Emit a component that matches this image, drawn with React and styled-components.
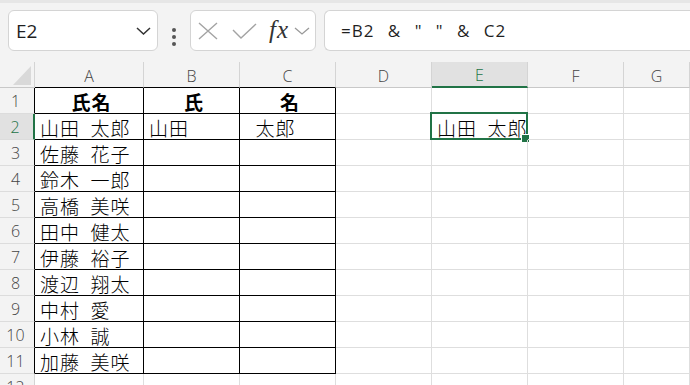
import styled, { createGlobalStyle } from "styled-components";

const GREEN = "#217346";
const GRID = "#dedede";
const HEAD_BG = "#f3f3f3";

const GlobalStyle = createGlobalStyle`
  html, body {
    margin: 0;
    padding: 0;
    background: #fff;
  }
  body {
    font-family: "Open Sans", "Noto Sans CJK JP", sans-serif;
    color: #1f1f1f;
  }
`;

const Page = styled.div`
  width: 690px;
  height: 385px;
  overflow: hidden;
  display: flex;
  flex-direction: column;
  background: #fff;
`;

// barra superior: cuadro de nombre, botones y barra de fórmulas
const Toolbar = styled.div`
  height: 62px;
  flex: none;
  box-sizing: border-box;
  border-top: 3px solid #e6e6e6;
  background: ${HEAD_BG};
  display: flex;
  align-items: flex-start;
  padding: 7px 0 0 8px;
`;

const Box = styled.div`
  height: 41px;
  box-sizing: border-box;
  background: #fff;
  border: 1px solid #d4d4d4;
  display: flex;
  align-items: center;
`;

const NameBox = styled(Box)`
  width: 150px;
  border-radius: 6px;
  justify-content: space-between;
  padding: 0 6px 0 7px;
  font-size: 19px;
  color: #1f1f1f;
`;

const Dots = styled.div`
  align-self: center;
  margin: 1px 0 0 14px;
  display: flex;
  flex-direction: column;
  gap: 3px;
  & > span {
    width: 4px;
    height: 4px;
    border-radius: 50%;
    background: #555;
  }
`;

const FxBox = styled(Box)`
  width: 126px;
  margin-left: 14px;
  border-radius: 6px;
  padding-left: 7px;
`;

const Slot = styled.span`
  display: flex;
  align-items: center;
  margin-left: ${(p) => p.$ml || 0}px;
`;

const FxLabel = styled.span`
  font-family: "Liberation Serif", serif;
  font-style: italic;
  font-size: 25px;
  letter-spacing: 1px;
  color: #333;
  line-height: 1;
  margin-top: -2px;
`;

const FormulaBar = styled(Box)`
  flex: 1;
  margin-left: 8px;
  border-right: none;
  border-radius: 6px 0 0 6px;
  padding-left: 16px;
  font-size: 17px;
  letter-spacing: 1px;
  word-spacing: 8px;
  white-space: pre;
  color: #1f1f1f;
`;

// hoja
const Sheet = styled.div`
  display: grid;
  grid-template-columns: 35px 109px repeat(5, 96px) 1fr;
  grid-auto-rows: 26px;
`;

const Corner = styled.div`
  background: ${HEAD_BG};
  border-right: 1px solid #d4d4d4;
  border-bottom: 1px solid #c8c8c8;
  display: flex;
  align-items: flex-end;
  justify-content: flex-end;
  padding: 0 3px 2px 0;
`;

const ColHead = styled.div`
  background: ${(p) => (p.$active ? "#e1e1e1" : HEAD_BG)};
  color: ${(p) => (p.$active ? GREEN : "#444")};
  border-right: 1px solid #d4d4d4;
  border-bottom: ${(p) =>
    p.$active
      ? `2px solid ${GREEN}`
      : p.$table
      ? "1px solid #000"
      : "1px solid #c8c8c8"};
  display: flex;
  align-items: center;
  justify-content: center;
  font-size: 16px;
  font-weight: 300;
  padding-top: 2px;
`;

const RowHead = styled.div`
  background: ${(p) => (p.$active ? "#e1e1e1" : HEAD_BG)};
  color: ${(p) => (p.$active ? GREEN : "#444")};
  border-right: ${(p) =>
    p.$active
      ? `2px solid ${GREEN}`
      : p.$table
      ? "1px solid #000"
      : "1px solid #d4d4d4"};
  border-bottom: 1px solid #dcdcdc;
  display: flex;
  align-items: center;
  justify-content: center;
  padding-right: 3px;
  font-size: 16px;
  font-weight: 300;
`;

const Cell = styled.div`
  position: relative;
  border-right: 1px solid ${(p) => (p.$table ? "#000" : GRID)};
  border-bottom: 1px solid ${(p) => (p.$table ? "#000" : GRID)};
  display: flex;
  align-items: center;
  justify-content: ${(p) => (p.$head ? "center" : "flex-start")};
  padding: 2px 0 0 5px;
  font-family: "Liberation Mono", "Noto Sans CJK JP", monospace;
  font-size: 19px;
  font-weight: ${(p) => (p.$head ? 700 : 300)};
  letter-spacing: 1px;
  word-spacing: -2px;
  white-space: pre;
  color: #000;
  overflow: visible;
`;

const Selection = styled.div`
  position: absolute;
  left: -2px;
  top: -2px;
  right: -1px;
  bottom: -1px;
  border: 2px solid ${GREEN};
  pointer-events: none;
`;

const Handle = styled.div`
  position: absolute;
  right: -3px;
  bottom: -4px;
  width: 7px;
  height: 7px;
  background: ${GREEN};
  box-shadow: 0 0 0 1px #fff;
`;

const COLS = ["A", "B", "C", "D", "E", "F", "G"];

const names = [
  "山田 太郎",
  "佐藤 花子",
  "鈴木 一郎",
  "高橋 美咲",
  "田中 健太",
  "伊藤 裕子",
  "渡辺 翔太",
  "中村 愛",
  "小林 誠",
  "加藤 美咲",
];

function valor(row, col) {
  if (row === 1) return ["氏名", "氏", "名"][col] || "";
  if (col === 0) return names[row - 2] || "";
  if (row === 2) {
    if (col === 1) return "山田";
    if (col === 2) return " 太郎";
    if (col === 4) return "山田 太郎";
  }
  return "";
}

function Chevron({ w, h, color, sw }) {
  return (
    <svg width={w} height={h} viewBox={`0 0 ${w} ${h}`}>
      <polyline
        points={`1,1 ${w / 2},${h - 1} ${w - 1},1`}
        fill="none"
        stroke={color}
        strokeWidth={sw}
      />
    </svg>
  );
}

export default function App() {
  const rows = Array.from({ length: 12 }, (_, i) => i + 1);

  return (
    <>
      <GlobalStyle />
      <Page>
        <Toolbar>
          <NameBox>
            <span>E2</span>
            <Chevron w={15} h={8} color="#333" sw={1.5} />
          </NameBox>
          <Dots>
            <span />
            <span />
            <span />
          </Dots>
          <FxBox>
            <Slot>
              <svg width="20" height="18" viewBox="0 0 20 18">
                <path d="M1 1 L19 17 M19 1 L1 17" stroke="#a3a3a3" strokeWidth="1.4" fill="none" />
              </svg>
            </Slot>
            <Slot $ml={14}>
              <svg width="25" height="16" viewBox="0 0 25 16">
                <polyline points="1,7 9,15 24,1" stroke="#a3a3a3" strokeWidth="1.4" fill="none" />
              </svg>
            </Slot>
            <Slot $ml={12}>
              <FxLabel>fx</FxLabel>
            </Slot>
            <Slot $ml={5}>
              <Chevron w={16} h={8} color="#999" sw={1.3} />
            </Slot>
          </FxBox>
          <FormulaBar>{'=B2 & " " & C2'}</FormulaBar>
        </Toolbar>

        <Sheet>
          <Corner>
            <svg width="18" height="19" viewBox="0 0 18 19">
              <polygon points="18,0 18,19 0,19" fill="#d9d9d9" />
            </svg>
          </Corner>
          {COLS.map((c, i) => (
            <ColHead key={c} $active={c === "E"} $table={i < 3}>
              {c}
            </ColHead>
          ))}
          {rows.map((r) => (
            <Row key={r} r={r} />
          ))}
        </Sheet>
      </Page>
    </>
  );
}

function Row({ r }) {
  return (
    <>
      <RowHead $active={r === 2} $table={r <= 11}>
        {r}
      </RowHead>
      {COLS.map((c, i) => {
        const selected = r === 2 && c === "E";
        return (
          <Cell key={c} $table={i < 3 && r <= 11} $head={r === 1}>
            {valor(r, i)}
            {selected && (
              <Selection>
                <Handle />
              </Selection>
            )}
          </Cell>
        );
      })}
    </>
  );
}
